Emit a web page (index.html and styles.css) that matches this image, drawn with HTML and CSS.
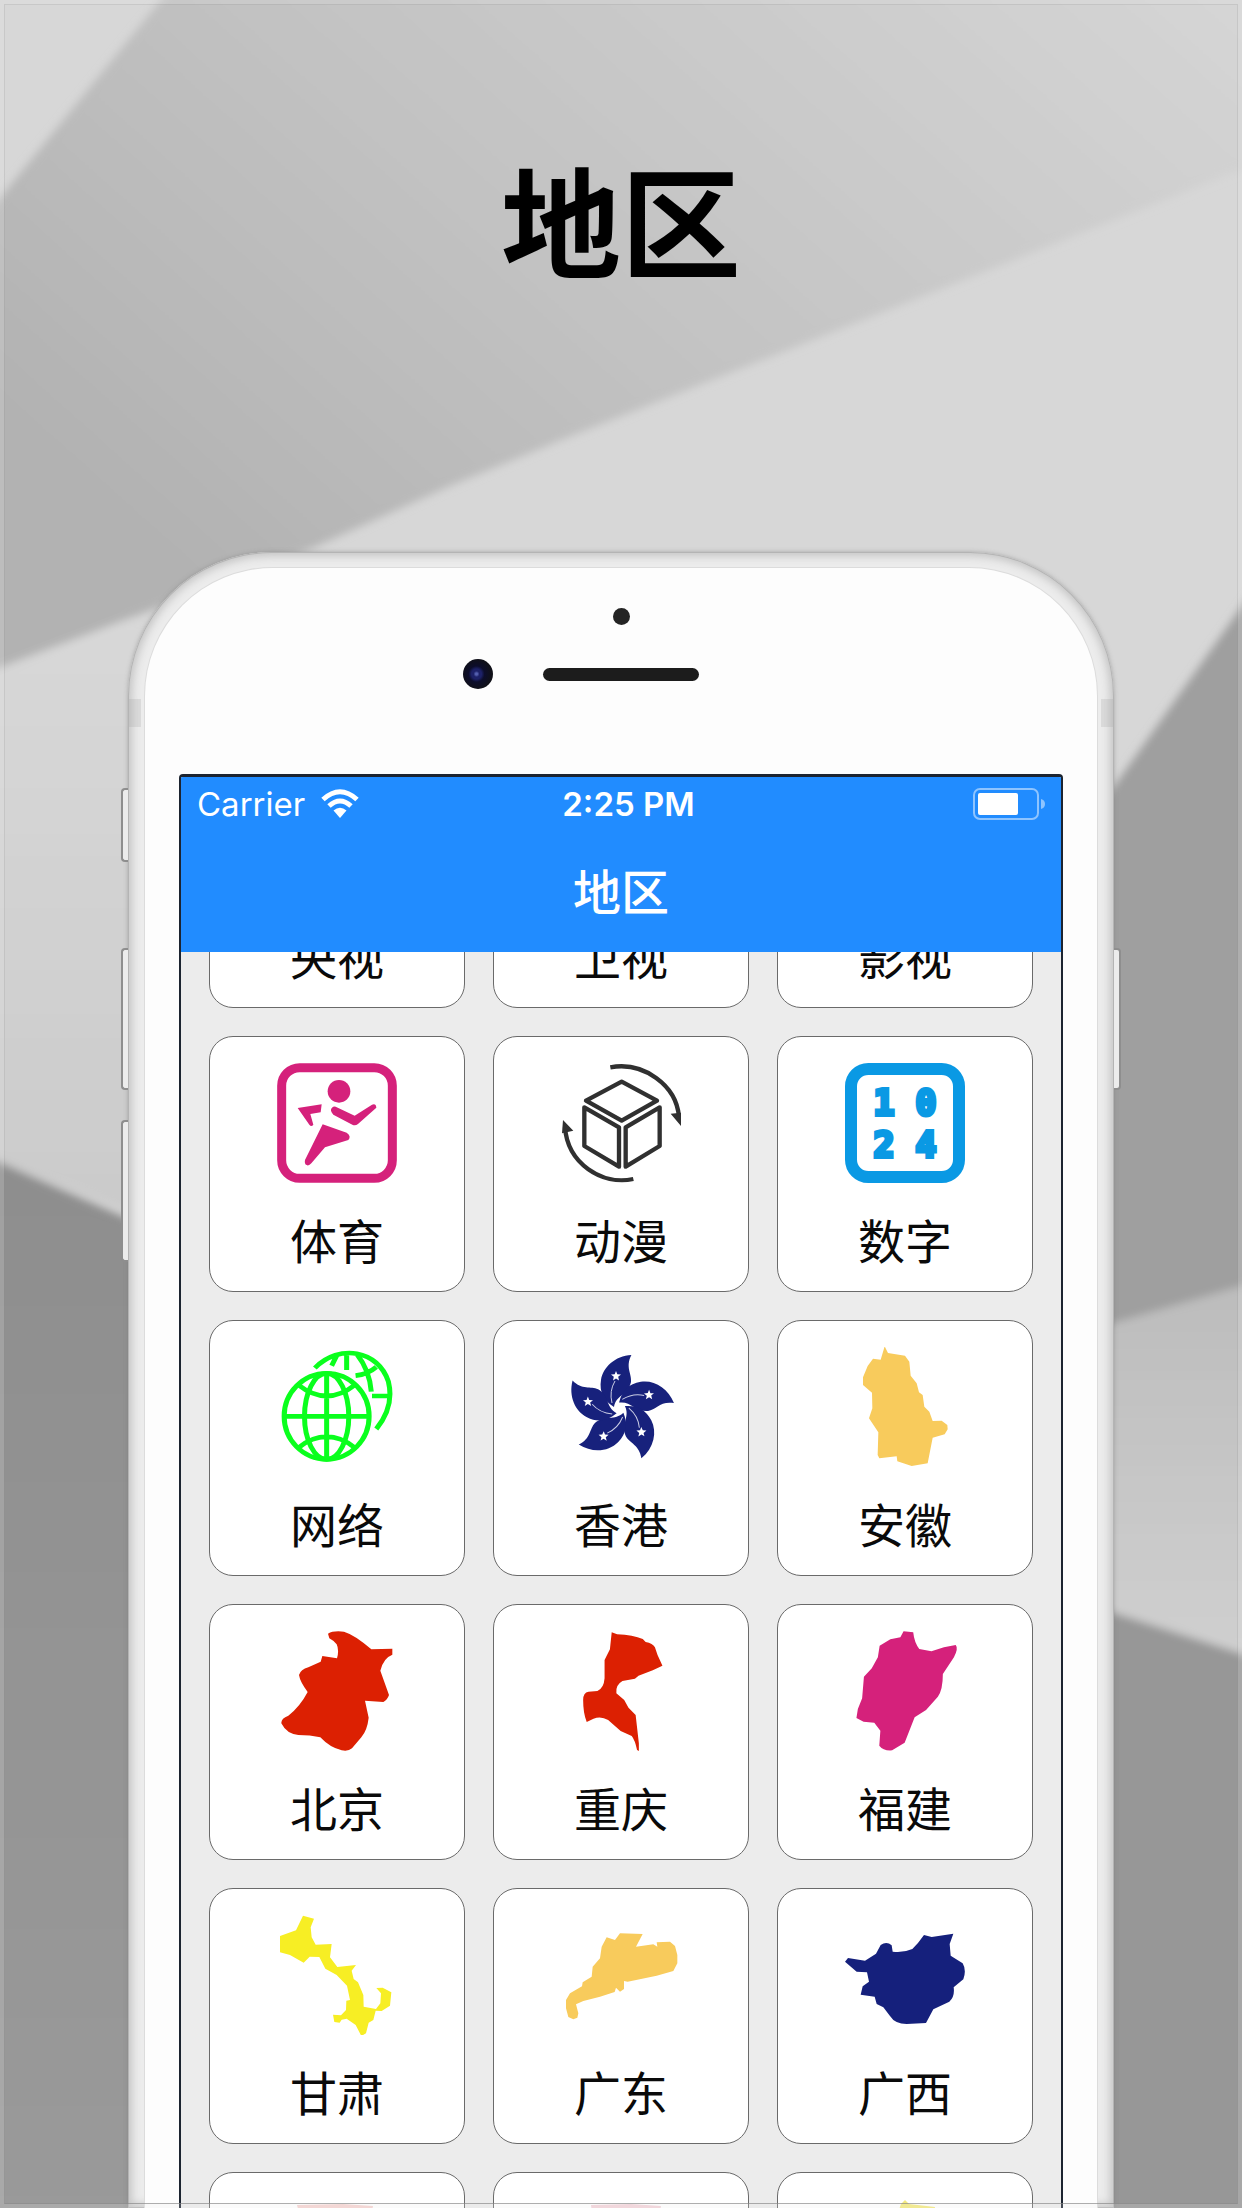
FILE: index.html
```html
<!DOCTYPE html>
<html lang="zh-CN">
<head>
<meta charset="utf-8">
<meta name="viewport" content="width=device-width, initial-scale=1">
<title>地区</title>
<link rel="stylesheet" href="styles.css">
</head>
<body>
<main class="stage">
  <svg class="backdrop" viewBox="0 0 882 1568" preserveAspectRatio="none" aria-hidden="true">
    <defs>
      <linearGradient id="band" x1="0" y1="0.6" x2="1" y2="0"><stop offset="0" stop-color="#b2b2b2"/><stop offset=".35" stop-color="#c0c0c0"/><stop offset="1" stop-color="#d6d6d6"/></linearGradient>
      <linearGradient id="left" x1="0" y1="0" x2="0" y2="1"><stop offset="0" stop-color="#d8d8d8"/><stop offset="1" stop-color="#cbcbcb"/></linearGradient>
      <linearGradient id="lower" x1="0" y1="0" x2="0" y2="1"><stop offset="0" stop-color="#8e8e8e"/><stop offset="1" stop-color="#9a9a9a"/></linearGradient>
      <linearGradient id="right" x1="0" y1="0" x2="0" y2="1"><stop offset="0" stop-color="#bcbcbc"/><stop offset="1" stop-color="#d0d0d0"/></linearGradient>
      <filter id="soft" x="-5%" y="-5%" width="110%" height="110%"><feGaussianBlur stdDeviation="3"/></filter>
    </defs>
    <rect width="882" height="1568" fill="#d7d7d7"/>
    <g filter="url(#soft)">
      <path d="M124-12H900V113L400 312L320 345L220 390L90 440L-10 478V153Z" fill="url(#band)"/>
      <path d="M-10 478L90 440H200V860H90L-10 822Z" fill="url(#left)"/>
      <path d="M-10 821L90 865H200V1580H-10Z" fill="url(#lower)"/>
      <path d="M900 405L790 560L700 700V960L790 940L900 908Z" fill="#9f9f9f"/>
      <path d="M700 960L790 940L900 908V1180L790 1145L700 1120Z" fill="url(#right)"/>
      <path d="M700 1120L790 1145L900 1180V1580H700Z" fill="#979797"/>
    </g>
  </svg>

  <h1 class="headline">地区</h1>

  <section class="phone">
    <i class="key mute"></i><i class="key vol-up"></i><i class="key vol-down"></i><i class="key power"></i>
    <i class="antenna antenna-left"></i><i class="antenna antenna-right"></i>
    <div class="face">
      <div class="bezel">
        <span class="sensor"></span>
        <div class="earpiece"><span class="camera"></span><span class="speaker"></span></div>
      </div>
      <div class="screen">
        <header class="navbar">
          <div class="status">
            <div class="carrier"><span>Carrier</span>
              <svg width="38" height="30" viewBox="0 0 38 30" aria-hidden="true"><g fill="none" stroke="#fff" stroke-width="5"><path d="M2 10.500Q19-5 36 10.500"/><path d="M8 17Q19 7 30 17"/></g><path d="M12.500 21.500Q19 16 25.500 21.500L19 29Z" fill="#fff"/></svg>
            </div>
            <time>2:25 PM</time>
            <div class="battery"><svg width="73" height="32" viewBox="0 0 73 32" aria-hidden="true"><rect x="1" y="1" width="64" height="30" rx="6" fill="none" stroke="#8ec4ff" stroke-width="2"/><rect x="5" y="5" width="40" height="22" rx="2" fill="#fff"/><path d="M68 11Q72 12 72 16T68 21Z" fill="#8ec4ff"/></svg></div>
          </div>
          <h2 class="navtitle">地区</h2>
        </header>
        <div class="list">
          <div class="grid">
            <button class="card"><span class="icon"></span>央视</button>
            <button class="card"><span class="icon"></span>卫视</button>
            <button class="card"><span class="icon"></span>影视</button>

            <button class="card"><svg class="icon" viewBox="231 99 360 360" aria-hidden="true"><rect x="245" y="113" width="332" height="332" rx="54" fill="none" stroke="#d5217b" stroke-width="27"/><g fill="#d5217b"><circle cx="417" cy="184" r="34"/><path d="M293 234L365 223L362 247L331 252L340 284Q334 292 328 284Z"/><path d="M407 230L464 257L516 224Q528 219 529 233L474 282Q466 288 457 284L400 254Q388 240 396 233Q401 228 407 230Z"/><path d="M368 283L440 308Q455 318 445 330L375 352L334 400Q325 411 316 403Q313 398 315 390Z"/></g></svg>体育</button>
            <button class="card"><svg class="icon" viewBox="228 99 360 360" aria-hidden="true"><g fill="none" stroke="#303030" stroke-width="13" stroke-linejoin="round"><path d="M410 155L516 212L410 272L303 212Z"/><path d="M298 232L402 292V410L298 348Z"/><path d="M524 232L422 292V410L524 348Z"/><path d="M376 112C475 94 575 165 582 262M445 447C350 467 248 400 240 292"/></g><path d="M557 251L588 288L590 248Z M234 270L231 310L265 302Z" fill="#303030"/></svg>动漫</button>
            <button class="card"><svg class="icon" viewBox="225 99 360 360" aria-hidden="true"><rect x="243" y="117" width="324" height="324" rx="52" fill="none" stroke="#0a99e4" stroke-width="36"/><g class="digits"><text x="342" y="256">1</text><text x="468" y="256">0</text><text x="342" y="381">2</text><text x="468" y="381">4</text></g></svg>数字</button>

            <button class="card"><svg class="icon" viewBox="216 96 336 360" preserveAspectRatio="none" aria-hidden="true"><g fill="none" stroke="#0aff1d" stroke-width="14"><ellipse cx="355" cy="304" rx="119" ry="129"/><ellipse cx="355" cy="304" rx="62" ry="129"/><path d="M355 175V433M236 304H474M276 210Q355 276 434 210M276 398Q355 332 434 398"/><path d="M322 159C390 85 500 105 528 200Q545 275 494 342M411 115V165M384 120L369 152M440 118Q475 165 480 230M494 156Q470 178 436 182M482 243H532"/></g></svg>网络</button>
            <button class="card"><svg class="icon" viewBox="0 0 120 120" aria-hidden="true"><defs><g id="petal"><path d="M70.400 8C54 9 42 20 40 33C38 45 43 54 53 60C55 48 67 48 70 35C71 27 64 20 70.400 8Z" fill="#17217c"/><path d="M51 56Q48 44 54 34" fill="none" stroke="#c9cce4" stroke-width="1"/><path d="M55 24L56.300 27.300L60 27.500L57.200 29.800L58 33.500L55 31.500L52 33.500L52.800 29.800L50 27.500L53.700 27.300Z" fill="#fff"/></g></defs><use href="#petal"/><use href="#petal" transform="rotate(72 58.600 61.300)"/><use href="#petal" transform="rotate(144 58.600 61.300)"/><use href="#petal" transform="rotate(216 58.600 61.300)"/><use href="#petal" transform="rotate(288 58.600 61.300)"/></svg>香港</button>
            <button class="card"><svg class="icon" viewBox="225 96 360 360" aria-hidden="true"><path d="M344 94L354 114L405 122L418 140L422 182L440 205L447 232L458 240L463 275L478 290L488 318L515 317L532 330L533 343L524 358L488 368L473 445L425 453L382 439L380 424L328 430L323 420L325 352L297 310L307 280L306 233L279 210V187L293 153L309 131L332 134Z" fill="#f8cb5c"/></svg>安徽</button>

            <button class="card"><svg class="icon" viewBox="231 93 360 360" aria-hidden="true"><path d="M384 101Q400 91 432 95Q465 105 514 148L577 146V164Q550 174 541 212L567 285Q562 300 550 306L495 302L506 353Q502 390 484 412L456 445Q445 455 425 451Q390 443 361 412Q330 405 295 405Q260 402 244 370Q243 355 265 347Q300 320 323 276Q300 245 297 225Q302 208 325 202L362 185L367 168L411 175Q418 150 410 133Q403 123 388 115Z" fill="#dc2002"/></svg>北京</button>
            <button class="card"><svg class="icon" viewBox="213 93 336 360" preserveAspectRatio="none" aria-hidden="true"><path d="M355 97L370 103Q415 105 442 117L450 126Q470 130 476 142Q482 165 492 185L497 197L470 211L430 227L420 236L385 243Q365 255 368 280L390 300L402 323L422 345L431 430V453L426 450Q420 420 411 408L380 393L345 360Q325 347 304 356L285 366Q275 340 275 300Q275 277 290 275L315 273Q333 265 335 235V180L350 148Z" fill="#dc2002"/></svg>重庆</button>
            <button class="card"><svg class="icon" viewBox="1008 93 336 360" preserveAspectRatio="none" aria-hidden="true"><path d="M1172 94L1199 97Q1202 128 1216 147L1250 154L1285 142L1318 135Q1326 145 1313 172L1282 222Q1282 270 1268 290L1235 330L1203 352L1175 428L1140 451Q1115 453 1104 437L1107 392L1090 368L1060 365L1040 354L1044 327L1056 295L1061 230L1083 205L1100 172L1105 137L1135 118L1163 112Z" fill="#d5217b"/></svg>福建</button>

            <button class="card"><svg class="icon" viewBox="231 90 360 360" aria-hidden="true"><path d="M309 92L342 101L332 127L335 157L347 179L395 177L390 217L412 246L468 240L455 257L461 282L474 292L490 330L491 365L528 372L541 355L543 325L529 309L548 308L574 322L570 362L545 378L527 377L520 405L506 413L498 445L484 453L467 420L440 401L425 404L419 413L403 411L399 389L423 391L438 375L439 347L450 345L441 302L410 270L376 251L358 216L329 215L311 233L270 210L240 202V153L288 136Z" fill="#f7ee24"/></svg>甘肃</button>
            <button class="card"><svg class="icon" viewBox="1083 90 360 360" aria-hidden="true"><path d="M1260 145L1328 147L1308 185L1360 178L1372 185L1370 172L1410 170L1425 183L1432 210V235L1420 258L1370 272L1283 290L1272 288V312L1260 320L1248 308L1244 321L1200 335L1150 348L1128 358L1135 385L1132 398L1120 403L1105 396L1098 370V345L1110 325L1146 304L1148 292L1175 275L1178 245L1200 220L1205 185L1220 157L1245 165Z" fill="#f8cb5c"/></svg>广东</button>
            <button class="card"><svg class="icon" viewBox="675 90 360 360" aria-hidden="true"><path d="M675 230L684 219L735 227L768 206L782 180Q800 168 815 181L818 200Q850 204 877 192Q895 175 912 150L935 156L1000 146L989 177L992 212L1028 235Q1040 255 1030 283L1001 307Q1005 335 988 350L940 373L918 414L860 417Q825 417 810 393L790 367L770 357L764 335L722 329L728 304L747 290L741 262L710 260Z" fill="#15207c"/></svg>广西</button>

            <button class="card" aria-label="更多"><svg class="icon" viewBox="0 0 120 120" aria-hidden="true"><path d="M20 6L66 5L96 7L80 90L40 80Z" fill="#f6d3d0"/></svg></button>
            <button class="card" aria-label="更多"><svg class="icon" viewBox="0 0 120 120" aria-hidden="true"><path d="M30 6L70 5L100 7L84 90L40 80Z" fill="#f3d2d9"/></svg></button>
            <button class="card" aria-label="更多"><svg class="icon" viewBox="0 0 120 120" aria-hidden="true"><path d="M60 1L64 5L90 8L80 90L30 80L56 5Z" fill="#f3e97e"/></svg></button>
          </div>
        </div>
      </div>
    </div>
  </section>
</main>
</body>
</html>
```
FILE: styles.css
```css
* { box-sizing: border-box; }

body {
  margin: 0;
  font-family: "Noto Sans CJK SC", sans-serif;
  color: #000;
}

.stage {
  position: relative;
  display: flex;
  flex-direction: column;
  height: 100vh;
  overflow: hidden;
}

/* thin frame round the whole poster */
.stage::after {
  content: "";
  position: absolute;
  inset: 4px;
  border: 1px solid rgba(140, 140, 140, .2);
  border-bottom-color: rgba(140, 140, 140, .7);
  box-shadow: 0 0 0 4px rgba(235, 235, 235, .2);
  pointer-events: none;
}

.backdrop {
  position: absolute;
  inset: 0;
  width: 100%;
  height: 100%;
}

.headline {
  position: relative;
  margin: 0;
  padding: 158px 0 274px;
  font-size: 120px;
  line-height: 120px;
  font-weight: 700;
  text-align: center;
}

.phone {
  position: relative;
  flex: 1;
  display: flex;
  min-height: 0;
  margin: 0 128px;
  padding: 16px 17px 0;
  border-radius: 144px 144px 0 0;
  background: #ececec;
  box-shadow: inset 0 0 0 1px #b4b4b4, inset 0 0 9px 4px #c4c4c4, 0 0 4px rgba(120, 120, 120, .5);
}

.face {
  flex: 1;
  display: flex;
  flex-direction: column;
  min-width: 0;
  padding: 0 34px;
  border-radius: 128px 128px 0 0;
  background: #fdfdfd;
  box-shadow: 0 0 0 1px #dcdcdc;
}

.bezel {
  display: flex;
  flex-direction: column;
  align-items: center;
  height: 206px;
  padding-top: 40px;
}

.sensor {
  width: 17px;
  height: 17px;
  border-radius: 50%;
  background: #242424;
}

.earpiece {
  display: flex;
  align-items: center;
  justify-content: center;
  gap: 50px;
  height: 30px;
  margin-top: 34px;
  padding-right: 80px;
}

.camera {
  width: 30px;
  height: 30px;
  border-radius: 50%;
  background: radial-gradient(circle at 45% 50%, #5560b0 0 1px, #1d2168 3px 5px, #0c0d2b 8px, #101018 15px);
}

.speaker {
  width: 156px;
  height: 13px;
  border-radius: 7px;
  background: #1c1c1c;
}

.key {
  position: absolute;
  left: -7px;
  width: 7px;
  height: 142px;
  border: 2px solid #8e8e8e;
  border-right: 0;
  border-radius: 4px 0 0 4px;
  background: #ececec;
}
.mute { top: 236px; height: 74px; }
.vol-up { top: 396px; }
.vol-down { top: 568px; }
.power {
  top: 396px;
  right: -7px;
  left: auto;
  transform: scaleX(-1);
}

.antenna {
  position: absolute;
  top: 147px;
  width: 12px;
  height: 28px;
  background: rgba(150, 150, 150, .2);
}
.antenna-left { left: 1px; }
.antenna-right { right: 1px; }

.screen {
  flex: 1;
  display: flex;
  flex-direction: column;
  min-height: 0;
  border: solid #1c2430;
  border-width: 3px 2px 0;
  border-radius: 4px 4px 0 0;
  background: #ececec;
  overflow: hidden;
}

.navbar {
  height: 175px;
  background: #218cff;
  color: #fff;
}

.status {
  display: grid;
  grid-template-columns: 1.04fr auto 1fr;
  align-items: center;
  height: 54px;
  padding: 0 15px 0 16px;
  font: 400 33px/40px Inter, sans-serif;
}
.status time { font-weight: 600; }
.carrier { display: flex; align-items: center; gap: 16px; }
.battery { display: flex; justify-content: flex-end; }

.navtitle {
  margin: 22px 0 0;
  font-size: 48px;
  line-height: 72px;
  font-weight: 500;
  text-align: center;
}

.list {
  flex: 1;
  min-height: 0;
  overflow: hidden;
}

/* list is scrolled so that the first row is partly under the bar */
.grid {
  display: grid;
  grid-template-columns: repeat(3, 1fr);
  gap: 28px;
  margin-top: -200px;
  padding: 0 28px;
}

.card {
  display: flex;
  flex-direction: column;
  align-items: center;
  gap: 21px;
  aspect-ratio: 1;
  padding: 26px 0 0;
  border: 1px solid #6a6a6a;
  border-radius: 24px;
  background: #fff;
  color: #0a0a0a;
  font: 400 47px/70px "Noto Sans CJK SC", sans-serif;
}

.icon {
  display: block;
  flex: none;
  width: 120px;
  height: 120px;
}

.digits {
  fill: #0a99e4;
  stroke: #0a99e4;
  stroke-width: 12px;
  font: 700 104px "DejaVu Sans Mono", monospace;
  text-anchor: middle;
}
```
